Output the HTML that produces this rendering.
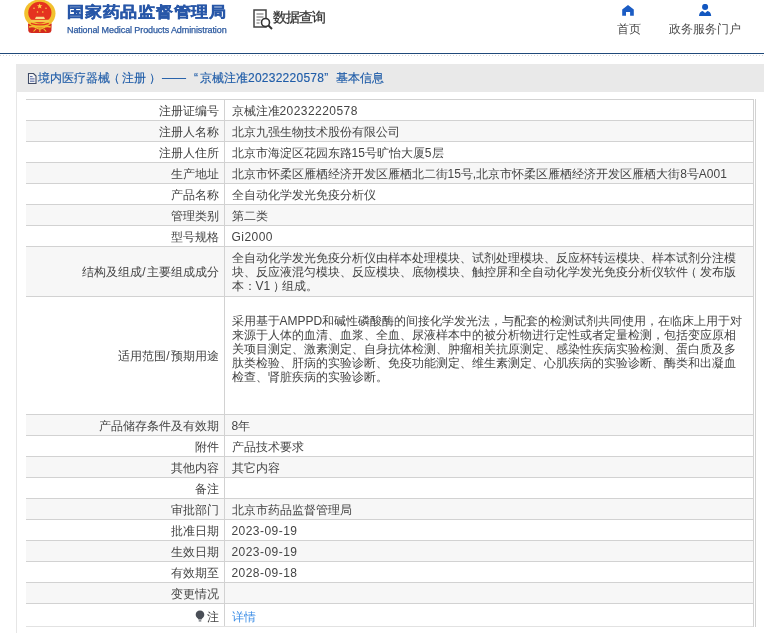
<!DOCTYPE html>
<html><head><meta charset="utf-8">
<style>
*{margin:0;padding:0;box-sizing:border-box}
body{will-change:transform}
html,body{text-spacing-trim:space-all;width:764px;height:633px;overflow:hidden;background:#fff;font-family:"Liberation Sans",sans-serif;color:#444}
.abs{position:absolute}
#emblem{left:24px;top:0;width:32px;height:34px}
#t1{left:67px;top:2px;font-size:17px;font-weight:900;color:#2857a8;letter-spacing:0.75px;line-height:20px;white-space:nowrap;transform:scaleY(0.88);transform-origin:0 17px;-webkit-text-stroke:0.45px #2857a8}
#t2{left:67px;top:25px;font-size:9px;color:#2d5aa0;letter-spacing:-0.1px;-webkit-text-stroke:0.25px #2d5aa0;line-height:11px;white-space:nowrap}
#qicon{left:253px;top:8.5px;width:21px;height:21px}
#qtext{left:273px;top:6.5px;font-size:14px;letter-spacing:-1px;color:#333;-webkit-text-stroke:0.25px #333;line-height:20px;white-space:nowrap}
.nav{font-size:12px;color:#4a4a4a;line-height:14px;white-space:nowrap}
#blue{left:0;top:53px;width:764px;height:1px;background:#20497a}
#dots{left:0;top:55px;width:764px;height:1px;background-image:linear-gradient(90deg,#d6d6d6 1px,transparent 1px);background-size:3px 1px}
#bar{left:16px;top:64px;width:748px;height:28px;background:#e9e9e9}
#lborder{left:16px;top:92px;width:1px;height:541px;background:#e6e6e6}
#title{left:27px;top:64px;height:28px;line-height:28px;font-size:12px;color:#1f5ca8;-webkit-text-stroke:0.15px #1f5ca8;white-space:nowrap}
#tbl{position:absolute;left:26px;top:99px;width:727px;border-collapse:collapse;font-size:12px;line-height:14px;color:#444}
#tbl td{border-top:1px solid #d2d2d2;padding:0}
#tbl tr.g td{background:#f7f7f7}
#tbl td.l{width:198px;text-align:right;padding-right:5px;padding-top:1px;border-right:1px solid #d2d2d2}
#tbl td.v{padding-left:7px;padding-top:1px}
.n{letter-spacing:0.45px}
.sl{margin:0 0.8px}
#rb1{left:753px;top:99px;width:1px;height:528px;background:#d2d2d2}
#rb2{left:755px;top:99px;width:1px;height:528px;background:#d2d2d2}
#bot{left:26px;top:626px;width:727px;height:1px;background:#e2e2e2}
</style></head><body>
<svg id="emblem" class="abs" viewBox="0 0 32 34">
  <path d="M4 23.5 L4.3 30.5 Q4.6 33 7.5 33 L24.2 33 Q27.1 33 27.4 30.5 L27.7 23.5 Z" fill="#d42a1e"/>
  <ellipse cx="15.85" cy="13.6" rx="15.65" ry="14.2" fill="#f2c12e"/>
  <ellipse cx="15.85" cy="12.6" rx="11.6" ry="10.8" fill="#e5321f"/>
  <path d="M15.7 3.4l0.75 1.9 2 0.05-1.6 1.25 0.6 1.95-1.75-1.15-1.75 1.15 0.6-1.95-1.6-1.25 2-0.05z" fill="#fbd648"/>
  <circle cx="10" cy="8.2" r="0.75" fill="#fbd648"/><circle cx="22" cy="8.2" r="0.75" fill="#fbd648"/>
  <circle cx="13.5" cy="12" r="0.75" fill="#fbd648"/><circle cx="18.8" cy="12" r="0.75" fill="#fbd648"/>
  <path d="M12 16.7h8l1 2.3h-10z" fill="#f8dc8a"/>
  <rect x="6.5" y="19.8" width="19" height="2.4" fill="#f4cc4e"/>
  <path d="M7 23.3 Q15.85 26.5 24.7 23.3" stroke="#e5321f" stroke-width="1.4" fill="none"/>
  <path d="M5 27 Q9 25.5 12.5 28 Q15.85 30 19.2 28 Q22.7 25.5 26.7 27" stroke="#f2c12e" stroke-width="1.4" fill="none"/>
  <path d="M9.5 31.5 L12 28.8 M22.2 31.5 L19.7 28.8 M15.85 28.5 v3.5" stroke="#f2c12e" stroke-width="1.1" fill="none"/>
</svg>
<div id="t1" class="abs">国家药品监督管理局</div>
<div id="t2" class="abs">National Medical Products Administration</div>
<svg id="qicon" class="abs" viewBox="0 0 21 21">
  <rect x="1" y="1" width="12" height="17" fill="none" stroke="#444" stroke-width="1.5"/>
  <path d="M3.5 5h7M3.5 8h7M3.5 11h4M3.5 14h3" stroke="#666" stroke-width="1.2"/>
  <circle cx="12.5" cy="13.5" r="4" fill="#fff" stroke="#333" stroke-width="1.6"/>
  <path d="M15.5 16.5l3.5 3.5" stroke="#333" stroke-width="2"/>
</svg>
<div id="qtext" class="abs">数据查询</div>
<svg class="abs" style="left:622px;top:5px" width="12" height="11" viewBox="0 0 12 11"><path d="M6 0L11.8 4.5V10.8H8.1V6.9H4V10.8H0.2V4.5Z" fill="#1b5cc4"/></svg>
<div class="abs nav" style="left:617px;top:22px">首页</div>
<svg class="abs" style="left:699px;top:4px" width="13" height="12" viewBox="0 0 13 12"><circle cx="6.1" cy="2.9" r="3.05" fill="#1257c0"/><path d="M0 11.9Q0.3 7.6 3.8 6.9L6.1 8.9L8.4 6.9Q11.9 7.6 12.2 11.9Z" fill="#1257c0"/></svg>
<div class="abs nav" style="left:669px;top:22px">政务服务门户</div>
<div id="blue" class="abs"></div>
<div id="dots" class="abs"></div>
<div id="bar" class="abs"></div>
<div id="lborder" class="abs"></div>
<div id="title" class="abs"><svg width="10" height="12" viewBox="0 0 10 12" style="vertical-align:-2px;margin-right:1px"><path d="M1.5 1.5h5l2.5 2.5v7.5h-7.5z" fill="#fff" fill-opacity="0.5" stroke="#3f4b66" stroke-width="1.1"/><path d="M3 4.6h2.6M3 6.9h4.5M3 9.2h4.5" stroke="#4a5fa0" stroke-width="1"/></svg>境内医疗器械<span style="position:relative;left:-2px">（</span>注册<span style="position:relative;left:3px">）</span><span style="margin-left:4px">——</span><span style="margin-left:8px;margin-right:2px">“</span>京械注准<span style="letter-spacing:0.25px">20232220578</span><span style="margin-right:8px">”</span>基本信息</div>

<table id="tbl">
<tr style="height:21px"><td class="l">注册证编号</td><td class="v">京械注准<span class="n">20232220578</span></td></tr>
<tr class="g" style="height:21px"><td class="l">注册人名称</td><td class="v">北京九强生物技术股份有限公司</td></tr>
<tr style="height:21px"><td class="l">注册人住所</td><td class="v">北京市海淀区花园东路15号旷怡大厦5层</td></tr>
<tr class="g" style="height:21px"><td class="l">生产地址</td><td class="v">北京市怀柔区雁栖经济开发区雁栖北二街15号,北京市怀柔区雁栖经济开发区雁栖大街8号A001</td></tr>
<tr style="height:21px"><td class="l">产品名称</td><td class="v">全自动化学发光免疫分析仪</td></tr>
<tr class="g" style="height:21px"><td class="l">管理类别</td><td class="v">第二类</td></tr>
<tr style="height:21px"><td class="l">型号规格</td><td class="v"><span class="n">Gi2000</span></td></tr>
<tr class="g" style="height:50px"><td class="l">结构及组成<span class="sl">/</span>主要组成成分</td><td class="v" style="padding-right:8px">全自动化学发光免疫分析仪由样本处理模块、试剂处理模块、反应杯转运模块、样本试剂分注模块、反应液混匀模块、反应模块、底物模块、触控屏和全自动化学发光免疫分析仪软件<span style="position:relative;left:-3px">（</span>发布版本：V1<span style="position:relative;left:3px">）</span>组成。</td></tr>
<tr style="height:118px"><td class="l">适用范围<span class="sl">/</span>预期用途</td><td class="v" style="padding-right:8px;vertical-align:top;padding-top:17px">采用基于AMPPD和碱性磷酸酶的间接化学发光法，与配套的检测试剂共同使用，在临床上用于对来源于人体的血清、血浆、全血、尿液样本中的被分析物进行定性或者定量检测，包括变应原相关项目测定、激素测定、自身抗体检测、肿瘤相关抗原测定、感染性疾病实验检测、蛋白质及多肽类检验、肝病的实验诊断、免疫功能测定、维生素测定、心肌疾病的实验诊断、酶类和出凝血检查、肾脏疾病的实验诊断。</td></tr>
<tr class="g" style="height:21px"><td class="l">产品储存条件及有效期</td><td class="v">8年</td></tr>
<tr style="height:21px"><td class="l">附件</td><td class="v">产品技术要求</td></tr>
<tr class="g" style="height:21px"><td class="l">其他内容</td><td class="v">其它内容</td></tr>
<tr style="height:21px"><td class="l">备注</td><td class="v"></td></tr>
<tr class="g" style="height:21px"><td class="l">审批部门</td><td class="v">北京市药品监督管理局</td></tr>
<tr style="height:21px"><td class="l">批准日期</td><td class="v"><span class="n">2023-09-19</span></td></tr>
<tr class="g" style="height:21px"><td class="l">生效日期</td><td class="v"><span class="n">2023-09-19</span></td></tr>
<tr style="height:21px"><td class="l">有效期至</td><td class="v"><span class="n">2028-09-18</span></td></tr>
<tr class="g" style="height:21px"><td class="l">变更情况</td><td class="v"></td></tr>
<tr style="height:23px"><td class="l" style="padding-top:3px"><svg width="10" height="12" viewBox="0 0 10 12" style="vertical-align:-1px;margin-right:2px"><path d="M5 0.5C2.4 0.5 0.7 2.4 0.7 4.7C0.7 6.6 2 7.6 3 8.6L3.4 9.6H6.6L7 8.6C8 7.6 9.3 6.6 9.3 4.7C9.3 2.4 7.6 0.5 5 0.5Z" fill="#4a4f57"/><rect x="3.6" y="10.2" width="2.8" height="1.4" rx="0.5" fill="#6a6f77"/></svg>注</td><td class="v" style="color:#3d8ee6;padding-top:3px">详情</td></tr>
</table>
<div id="rb1" class="abs"></div>
<div id="rb2" class="abs"></div>
<div id="bot" class="abs"></div>
</body></html>
